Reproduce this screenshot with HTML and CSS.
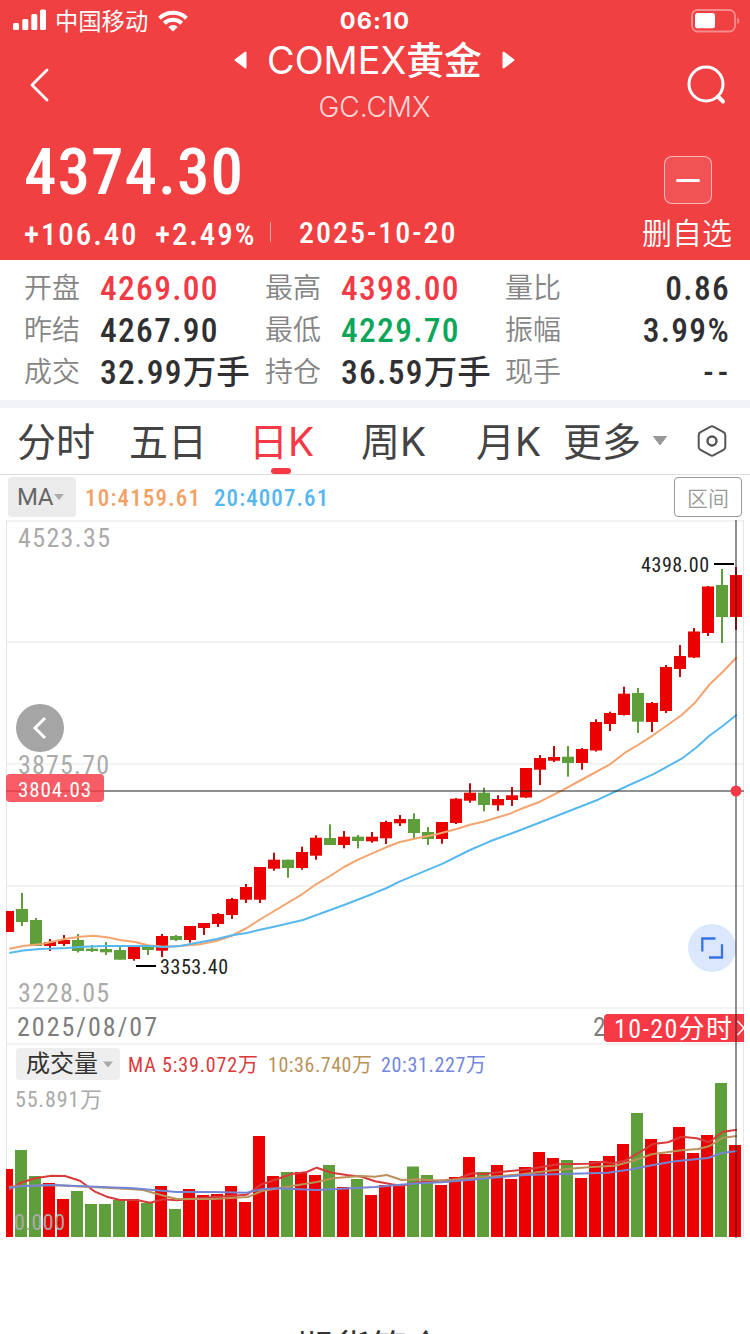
FILE: index.html
```html
<!DOCTYPE html>
<html lang="zh-CN">
<head>
<meta charset="utf-8">
<title>COMEX黄金</title>
<link rel="stylesheet" href="styles.css">
</head>
<body>
<header class="head">
  <div class="status">
    <div class="carrier">
      <svg class="signal" width="34" height="22" viewBox="0 0 34 22" fill="#fff"><rect x="0" y="14" width="6" height="7" rx="1.5"/><rect x="9.3" y="10" width="6" height="11" rx="1.5"/><rect x="18.3" y="5" width="6" height="16" rx="1.5"/><rect x="27" y="0.500" width="6" height="20.500" rx="1.5"/></svg>
      <span>中国移动</span>
      <svg width="30" height="22" viewBox="0 0 30 22" fill="none" stroke="#fff" stroke-width="4"><path d="M1.500 8.200a19.500 19.500 0 0 1 27 0"/><path d="M6.300 13.200a12.500 12.500 0 0 1 17.400 0"/><path d="M15 21.600l-4.700-4.600a6.800 6.800 0 0 1 9.400 0z" fill="#fff" stroke="none"/></svg>
    </div>
    <time class="clock">06:10</time>
    <svg class="battery" width="50" height="24" viewBox="0 0 50 24"><rect x="1" y="1" width="43" height="21.500" rx="5.500" fill="none" stroke="#fff" stroke-opacity=".4" stroke-width="1.800"/><rect x="4" y="4" width="20" height="15.300" rx="2.500" fill="#fff"/><path d="M46.300 8.500q2 1.200 2 3.300t-2 3.300z" fill="#fff" fill-opacity=".45"/></svg>
  </div>
  <nav class="titlebar">
    <svg class="back" width="20" height="34" viewBox="0 0 20 34" fill="none" stroke="#fff" stroke-width="2.800" stroke-linecap="round" stroke-linejoin="round"><path d="M17 2L2 17l15 15"/></svg>
    <div class="titles">
      <div class="name">
        <svg width="13" height="20" viewBox="0 0 13 20" fill="#fff" stroke="#fff" stroke-width="2" stroke-linejoin="round"><path d="M11.500 2.500v15L1.500 10z"/></svg>
        <h1>COMEX<span>黄金</span></h1>
        <svg width="13" height="20" viewBox="0 0 13 20" fill="#fff" stroke="#fff" stroke-width="2" stroke-linejoin="round"><path d="M1.500 2.500v15L11.500 10z"/></svg>
      </div>
      <div class="code">GC.CMX</div>
    </div>
    <svg class="search" width="40" height="42" viewBox="0 0 40 42" fill="none" stroke="#fff" stroke-width="3"><circle cx="19" cy="20" r="17"/><path d="M31 32.500l5 5" stroke-width="4" stroke-linecap="round"/></svg>
  </nav>
  <div class="quote">
    <div class="figures">
      <div class="price">4374.30</div>
      <div class="change"><span class="diff">+106.40</span><span class="pct">+2.49%</span><i></i><span class="date">2025-10-20</span></div>
    </div>
    <div class="fav"><span class="minus"></span><span>删自选</span></div>
  </div>
</header>

<section class="stats">
  <label>开盘</label><b class="up">4269.00</b><label>最高</label><b class="up">4398.00</b><label>量比</label><b class="end">0.86</b>
  <label>昨结</label><b>4267.90</b><label>最低</label><b class="down">4229.70</b><label>振幅</label><b class="end">3.99%</b>
  <label>成交</label><b>32.99<em>万手</em></b><label>持仓</label><b>36.59<em>万手</em></b><label>现手</label><b class="end dash">--</b>
</section>

<nav class="tabs">
  <span>分时</span><span>五日</span><span class="on">日K</span><span>周K</span><span>月K</span><span>更多</span>
  <svg class="caret" width="16" height="12" viewBox="0 0 16 12"><path d="M1.500 1.500h13L8 10z" fill="#999" stroke="#999" stroke-linejoin="round"/></svg>
  <svg class="gear" width="30" height="32" viewBox="0 0 30 32" fill="none" stroke="#555" stroke-width="2"><path d="M13.200 1.800q1.800-1 3.600 0l9.700 5.400q1.800 1 1.800 3v11.600q0 2-1.800 3l-9.700 5.400q-1.800 1-3.600 0l-9.700-5.400q-1.800-1-1.800-3V10.200q0-2 1.800-3z"/><circle cx="15" cy="16" r="4.500" stroke-width="2.400"/></svg>
</nav>

<div class="legend">
  <span class="chip">MA<svg width="10" height="7" viewBox="0 0 10 7"><path d="M0 0h10L5 6z" fill="#aaa"/></svg></span>
  <span class="ma10">10:4159.61</span><span class="ma20">20:4007.61</span>
  <button class="range">区间</button>
</div>

<svg class="chart" id="chart" width="750" height="727" viewBox="0 518 750 727">
  <g stroke="#f3f3f3" stroke-width="2">
    <path d="M6 521H744M7 642H744M7 764H744M7 886H744M7 1008H744M7 1044H744"/>
    <path d="M6.500 520V1237M743.500 520V1237" stroke="#e6e6e6" stroke-width="1"/>
  </g>
  <g id="candles"></g>
  <g class="line">
    <polyline stroke="#f4a46e" points="9.300,948.700 23,946 42,944 65,939 80,936.700 93.300,935.700 107,937.300 120,940 135,942 148,945.300 163,946.700 177,946.300 200,944.300 217,940.700 232,935.700 246.700,928 260,919.500 302,894.300 316,884.300 330,876 344,867 358,859.700 386,847.300 400,842 416.700,838.300 436.700,834.300 456.700,829 470,824.700 483,821.700 510,813.700 520,809.300 540,801.700 561.700,790.700 583,779 610,764.300 625,752.700 638,745 653,735.300 681.700,715 695,702.700 710,684 722.700,672 736.700,657.300"/>
    <polyline stroke="#57b8ef" points="9.300,953 23,950.500 40,949 67,948 83,946.700 105,946 150,946 163,947 180,946 200,942.300 217,939 232,935.300 246.700,933 260,929.700 274,926.700 303,920 344,905 373,893.700 386.700,888 400,881.300 442.700,863.700 470,850 490,841.300 510,834 540,822.500 571.700,810 598,799.700 625,787 653,774.300 681.700,758.700 696.700,747.300 709,736 723,725.700 736.700,714.700"/>
  </g>
  <g class="axis" fill="#aaa" font-size="26">
    <text x="18" y="547" textLength="92">4523.35</text>
    <text x="18" y="774" textLength="91">3875.70</text>
    <text x="18" y="1002" textLength="91">3228.05</text>
  </g>
  <g class="axis" fill="#222" font-size="20">
    <text x="641" y="572" textLength="68">4398.00</text>
    <text x="160" y="974" textLength="68">3353.40</text>
    <path d="M714 564H734M136 966H156" stroke="#000" stroke-width="2"/>
  </g>
  <g class="axis" fill="#7d7d7d" font-size="26">
    <text x="17" y="1036" textLength="140">2025/08/07</text>
    <text x="593" y="1036">2</text>
  </g>
  <circle cx="40" cy="728" r="24" fill="#a5a5a5"/>
  <path d="M45 718l-10 10 10 10" fill="none" stroke="#fff" stroke-width="3"/>
  <circle cx="712" cy="948" r="24" fill="#dbe7fd"/>
  <path d="M702.300 951.500V938.500H715.500M722 944.300V957.500H709" fill="none" stroke="#3674e2" stroke-width="2.300"/>
  <g id="volume"></g>
  <g class="line vol">
    <polyline stroke="#d83a3c" points="9.300,1190 20.700,1182.700 35,1178.300 51.700,1175.700 65,1176 80,1180.700 95,1191.700 106.700,1196.700 120,1200 136.700,1200 150,1202.700 163,1199.300 176.700,1200.300 193,1198.700 217,1196.700 246.700,1194.700 261.700,1184.300 276.700,1179.300 291.700,1174 306.700,1172 316.700,1167.700 331.700,1172.700 346.700,1175 361.700,1176.700 375,1181.300 391.700,1184.300 401.700,1185.700 418,1182.300 445,1180.300 456.700,1179 471.700,1173.300 485,1174 498,1172.300 528,1169.300 558,1164.300 588,1163.700 601.700,1161.700 613,1163.300 625,1160.700 641.700,1151 653,1144 668,1142.300 681.700,1136.700 696.700,1138.300 709,1142.300 723,1131.700 737,1129.700"/>
    <polyline stroke="#b8925a" points="9,1187 20,1186 52,1185 130,1189 143,1190 160,1194.700 176.700,1199 213,1199 248,1197 261.700,1191 280,1188 316.700,1182 333,1178.300 360,1176 375,1176.700 386.700,1175 401.700,1180 418,1179.300 441.700,1180.700 475,1177.700 521.700,1174.300 555,1170 588,1167.300 615,1165.700 631.700,1161.300 651.700,1154.300 681.700,1150.300 698,1149 709,1146.300 723,1137.700 737,1136"/>
    <polyline stroke="#7484d4" points="9,1188 20,1186.300 52,1185 133,1188.300 176.700,1192 213,1192 246.700,1192.700 261.700,1189.300 276.700,1188.300 316.700,1190 375,1187 418,1183.300 441.700,1182.300 471.700,1179.700 525,1175 555,1174.300 608,1172.700 631.700,1169.300 651.700,1165.300 675,1161.300 708,1158 721.700,1153 737,1151"/>
  </g>
  <path d="M6 791H744" stroke="#222" stroke-opacity=".5" stroke-width="2"/>
  <rect x="6" y="774" width="98" height="28" rx="4" fill="#f73945" fill-opacity=".82"/>
  <text class="axis" x="18" y="796.500" font-size="21" fill="#fff" textLength="73">3804.03</text>
  <rect x="16" y="1048" width="104" height="32" rx="4" fill="#eee"/>
  <text class="axis" x="26" y="1072" font-size="24" fill="#333" textLength="72">成交量</text>
  <path d="M103 1061.500h10l-5 6z" fill="#aaa"/>
  <g class="axis" font-size="20">
    <text x="128" y="1072" fill="#d93a3c" textLength="130">MA 5:39.072万</text>
    <text x="268" y="1072" fill="#b8925a" textLength="104">10:36.740万</text>
    <text x="381" y="1072" fill="#7286dc" textLength="105">20:31.227万</text>
  </g>
  <g class="axis" fill="#aaa" font-size="22">
    <text x="15" y="1107" textLength="87">55.891万</text>
    <text x="14" y="1230" textLength="51">0.000</text>
  </g>
  <path d="M608 1014H744V1042H608q-4 0-4-4V1018q0-4 4-4z" fill="#f73945"/>
  <text class="axis" x="614" y="1038" font-size="26" fill="#fff" textLength="118">10-20分时</text>
  <path d="M737.500 1021L744 1028l-6.500 7" fill="none" stroke="#fff" stroke-width="1.500"/>
  <path d="M736 520V1238" stroke="#222" stroke-opacity=".5" stroke-width="2"/>
  <circle cx="736" cy="791" r="5.500" fill="#f73a45"/>
</svg>

<footer class="sheet">期货简介</footer>
<script src="chart.js"></script>
</body>
</html>
```
FILE: styles.css
```css
* { box-sizing: border-box; }
html, body { margin: 0; height: 1334px; overflow: hidden; }
body {
  width: 750px;
  background: #fff;
  font-family: Roboto, "Noto Sans CJK SC", sans-serif;
  color: #303032;
}
svg { display: block; flex: none; }
.head { height: 260px; background: #f04042; color: #fff; }

.status {
  height: 40px;
  display: grid;
  grid-template-columns: 1fr 90px 1fr;
  align-items: center;
  padding: 0 10px 0 13px;
}
.carrier { display: flex; align-items: center; gap: 8px; font-size: 23.300px; font-weight: 400; line-height: 42px; }
.carrier span { height: 40px; }
.carrier svg:last-child { margin-left: 2px; }
.carrier .signal { margin-top: -2px; }
.clock { font: 700 23.500px/40px Inter, sans-serif; text-align: center; letter-spacing: 1.100px; margin: 1px 0 0 -3px; }
.battery { justify-self: end; margin-right: -1px; }

.titlebar { height: 88px; display: flex; padding: 0 23px 0 30px; }
.back { margin-top: 28px; }
.titles { flex: 1; margin-left: 12px; font-family: Inter, "Noto Sans CJK SC", sans-serif; }
.name { height: 40px; display: flex; justify-content: center; align-items: center; gap: 20px; }
.name h1 { margin: 0; font-size: 37.800px; font-weight: 400; line-height: 42px; white-space: nowrap; }
.name h1 span { font-weight: 500; }
.code { text-align: center; font-size: 28px; font-weight: 300; line-height: 54px; color: rgba(255,255,255,.8); }
.search { margin-top: 24px; }

.quote { display: flex; justify-content: space-between; padding: 0 18px 0 24px; }
.price, .change, .stats b, .ma10, .ma20, .axis { font-stretch: 85%; }
.price { margin-top: 12px; height: 64px; font-size: 65px; line-height: 64px; font-weight: 500; letter-spacing: 1px; }
.change { display: flex; align-items: center; height: 40px; margin-top: 11px; font-size: 31px; line-height: 40px; font-weight: 500; letter-spacing: 1.900px; white-space: nowrap; }
.diff { width: 131px; }
.pct { width: 115px; }
.change i { width: 1px; height: 20px; background: rgba(255,255,255,.5); margin-top: -7px; }
.date { margin: -5px 0 0 28px; font-size: 30px; letter-spacing: 2px; }
.fav { display: flex; flex-direction: column; width: 90px; margin-top: 28px; font-size: 30px; line-height: 60px; font-weight: 350; }
.minus {
  width: 48px; height: 48px; margin-left: 22px;
  border: 1px solid rgba(255,255,255,.6); border-radius: 8px;
  background: rgba(255,255,255,.1);
  display: grid; place-items: center;
}
.minus::after { content: ""; width: 24px; height: 3px; border-radius: 2px; background: #fff; }

.stats {
  height: 140px;
  padding: 8px 20px 6px 24px;
  display: grid;
  grid-template-columns: 76px 165px 76px 164px 76px 1fr;
  grid-template-rows: repeat(3, 42px);
  line-height: 42px;
  white-space: nowrap;
}
.stats label { font-size: 28px; font-weight: 350; color: #858585; }
.stats b { font-size: 33.500px; font-weight: 500; letter-spacing: 1.300px; }
.stats em { font-style: normal; letter-spacing: 0; font-size: 33.500px; }
.stats .end { text-align: right; }
.stats .dash { letter-spacing: 4px; margin-right: -2px; }
.stats .up { color: #f23b46; }
.stats .down { color: #0ca65a; }

.tabs {
  height: 75px;
  border-top: 8px solid #f2f3f7;
  border-bottom: 1px solid #ddd;
  padding-left: 17px;
  display: flex;
  align-items: center;
  font: 370 39px/65px Inter, "Noto Sans CJK SC", sans-serif;
  color: #444;
}
.tabs span { height: 65px; white-space: nowrap; width: 112px; flex: none; }
.tabs span:nth-child(2) { width: 120px; }
.tabs span:nth-child(4) { width: 115px; }
.tabs span:nth-child(5) { width: 87px; }
.tabs span:nth-child(6) { width: 89px; }
.tabs .on { color: #f73945; display: flex; flex-direction: column; font-weight: 430; }
.tabs .on::after { content: ""; width: 20px; height: 6px; flex: none; border-radius: 3px; background: #f73945; margin: -6px 0 0 22px; }
.gear { margin-left: 29px; }

.legend { height: 43px; display: flex; align-items: center; padding: 1px 8px 0; font-size: 23px; line-height: 44px; font-weight: 500; }
.chip { width: 68px; height: 40px; border-radius: 4px; background: #ebebeb; color: #666; display: flex; align-items: center; padding-left: 9px; font-size: 24px; font-weight: 400; gap: 1px; letter-spacing: -.3px; }
.ma10 { width: 129px; margin-left: 9px; color: #f4a062; padding-top: 3px; letter-spacing: 1.200px; }
.ma20 { color: #56b6f0; padding-top: 3px; letter-spacing: 1.100px; }
.range { margin-left: auto; width: 68px; height: 40px; padding: 0; border: 1px solid #999; border-radius: 4px; background: #fff; color: #999; font: 350 21px/36px "Noto Sans CJK SC", sans-serif; }

.chart { font-family: Roboto, "Noto Sans CJK SC", sans-serif; }
.line { fill: none; stroke-width: 2; stroke-linejoin: round; }
.sheet { height: 89px; padding: 77px 10px 0 0; text-align: center; font-size: 37px; line-height: 56px; overflow: hidden; color: #333; }
```
FILE: chart.js
```js
const RED = '#eb0000', GREEN = '#5f9f3b';
// body top, body bottom, wick top, wick bottom
const candles = [
  [911,932,911,932],[909,922,893,926],[920,946,918,946],[942,946,939,951],[940,944,935,946],[940,951,934,952.5],
  [948.7,951,945,952],[949,952.3,942,955],[950,959.7,947,959.7],[946,959,946,960.7],[946,950,946,955],[936,950.7,934,957],
  [936,940,935,941],[926,940,926,942.7],[923,928,923,935],[914,924,913,927],[899,915,898,919],[887,899.7,884,903],
  [867,899.7,867,903],[859.7,868.7,852.7,870.7],[859.7,868,859.7,877.7],[852,868,846.7,869.7],[837.7,855.7,835.3,859.7],
  [838,845,824.3,845],[836.7,845,831,848.3],[836.7,841,835,848.3],[836.7,841.3,832,842.7],[822,838.3,820.7,844],
  [819,823.3,815,826],[819,833,813.3,838],[832,839,827,845],[822,839,822,843.7],[798.7,823,798,824],[792.7,800.7,783.3,802.7],
  [792.7,805,787.7,811.3],[799,805.3,795.3,810.7],[795.3,800,787,806],[768,797.5,768,798],[758,769.7,755,785],
  [757,760.7,746,762],[756.7,763,746,776.7],[749,763,748,769.7],[722,750.5,719.3,751.5],[713,724,711.7,731],
  [693.7,715,686.7,715.5],[693,721.7,688,733],[703,722,702,732],[667,711,665,713],[656,669,645,677],
  [631.5,657.5,628,658],[586.5,633,586,636],[585,617,569,643],[575,617,567,630]
];
const volumes = [1169,1150,1176,1183,1199,1191,1204,1204,1200,1199,1203,1186,1209,1189,1195,1194,1186,1202,1136,1176,1172,1172,1175,1165,1187,1179,1195,1185,1184,1166.5,1175,1185,1177,1157,1172,1165,1179,1167,1152,1158,1160,1178,1161,1156,1144,1113,1139,1154,1127,1153,1135,1083,1145];
const falling = new Set([1,2,5,6,7,8,10,12,20,23,25,29,30,34,40,45,51]);

let body = '', bars = '';
candles.forEach(([top, bottom, high, low], i) => {
  const x = 8 + 14 * i, fill = falling.has(i) ? GREEN : RED;
  const left = Math.max(6, x - 6);
  body += `<rect x="${x - 1}" y="${high}" width="2" height="${low - high}" fill="${falling.has(i) ? GREEN : '#c4090c'}"/>`;
  body += `<rect x="${left}" y="${top}" width="${x + 6 - left}" height="${bottom - top}" fill="${fill}"/>`;
  const barLeft = Math.max(6, x - 7);
  bars += `<rect x="${barLeft}" y="${volumes[i]}" width="${x + 5 - barLeft}" height="${1237 - volumes[i]}" fill="${fill}"/>`;
});
document.getElementById('candles').innerHTML = body;
document.getElementById('volume').innerHTML = bars;
```
